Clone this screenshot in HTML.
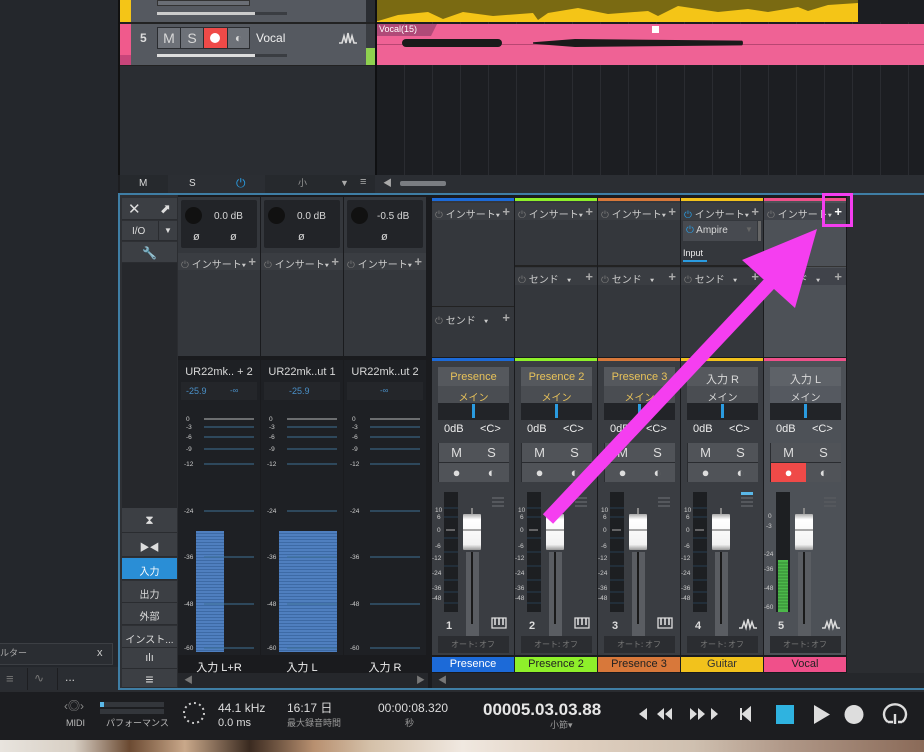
<!DOCTYPE html>
<html><head><meta charset="utf-8"><style>
*{box-sizing:border-box;margin:0;padding:0}
body{width:924px;height:752px;overflow:hidden;background:#1d1e21;font-family:"Liberation Sans","Noto Sans CJK JP",sans-serif;color:#d8d8d8;position:relative}
div,span{position:absolute}
.t{white-space:nowrap;line-height:1}
.ch{top:0;width:82px;height:690px}
.ch>div{left:0;width:82px}
.ins{height:17px;background:#3a3d42;font-size:10px;color:#ccc;padding:3px 0 0 3px;white-space:nowrap}
.ins span{position:static}
.ins b{position:absolute;right:4px;top:1px;font-size:13px;font-weight:bold;color:#aaa}
.pw{color:#777}
.nm{left:6px!important;width:71px!important;height:19px;background:#55585d;font-size:11px;text-align:center;padding-top:4px}
.mn{left:6px!important;width:71px!important;height:17px;background:#4a4d52;font-size:10px;text-align:center;padding-top:3px}
.pan{left:6px!important;width:71px!important;height:17px;background:#222428}
.pan i{position:absolute;left:34px;top:1px;width:3px;height:14px;background:#2a9be0}
.db{height:17px;font-size:11px;color:#eee}
.ms{left:6px!important;width:71px!important;height:39px;background:#2a2c30}
.ms span{width:35px;height:19px;background:#505358;font-size:13px;text-align:center;line-height:19px;color:#ddd}
.lbl{height:15px;font-size:11px;text-align:center;padding-top:2px}
.btn{background:#3c3f44;border-bottom:1px solid #2a2c30;left:122px;width:55px;font-size:10px;text-align:center;color:#ddd}
</style></head><body>

<!-- left dark panel -->
<div style="left:0;top:0;width:118px;height:690px;background:#24272c"></div>
<div style="left:0;top:643px;width:113px;height:22px;background:#2a2d32;border:1px solid #3c3f44;border-left:none"></div>
<div class="t" style="left:0;top:649px;font-size:9px;color:#aaa">ルター</div>
<div class="t" style="left:97px;top:648px;font-size:11px;color:#ccc">x</div>
<div style="left:0;top:667px;width:118px;height:23px;background:#2a2d32"></div>
<div class="t" style="left:6px;top:672px;font-size:13px;color:#777">≡</div>
<div style="left:27px;top:668px;width:1px;height:22px;background:#1d1e21"></div>
<div class="t" style="left:34px;top:672px;font-size:12px;color:#777">∿</div>
<div style="left:57px;top:668px;width:1px;height:22px;background:#1d1e21"></div>
<div class="t" style="left:65px;top:671px;font-size:12px;color:#ccc">...</div>

<!-- track header area -->
<div style="left:118px;top:0;width:257px;height:175px;background:#2a2d32;border-left:2px solid #111"></div>
<div style="left:120px;top:0;width:11px;height:22px;background:#f4c517"></div>
<div style="left:131px;top:0;width:235px;height:22px;background:#555960"></div>
<div style="left:157px;top:0;width:93px;height:6px;background:#6a6e75;border:1px solid #333"></div>
<div style="left:157px;top:12px;width:98px;height:3px;background:#ccc"></div>
<div style="left:255px;top:12px;width:32px;height:3px;background:#3a3d42"></div>
<div style="left:120px;top:22px;width:255px;height:2px;background:#222"></div>
<div style="left:120px;top:24px;width:11px;height:41px;background:#f05a8c"></div>
<div style="left:120px;top:55px;width:11px;height:10px;background:#c8457a"></div>
<div style="left:131px;top:24px;width:235px;height:41px;background:#555960"></div>
<div class="t" style="left:140px;top:32px;font-size:12px;font-weight:bold;color:#ddd">5</div>
<div style="left:157px;top:27px;width:93px;height:22px;background:#2a2c30"></div>
<div class="t" style="left:158px;top:28px;width:22px;height:20px;background:#6d7178;font-size:14px;text-align:center;line-height:20px">M</div>
<div class="t" style="left:181px;top:28px;width:22px;height:20px;background:#6d7178;font-size:14px;text-align:center;line-height:20px">S</div>
<div style="left:204px;top:28px;width:23px;height:20px;background:#ef4a48"></div>
<div style="left:210px;top:33px;width:10px;height:10px;border-radius:50%;background:#fff"></div>
<div class="t" style="left:228px;top:28px;width:21px;height:20px;background:#6d7178;font-size:12px;text-align:center;line-height:20px">◐</div>
<div class="t" style="left:256px;top:32px;font-size:12px;color:#eee">Vocal</div>
<svg style="position:absolute;left:338px;top:30px" width="20" height="16"><path d="M1 13h3l2-7 2 7 2-10 2 10 2-7 2 7h3" stroke="#ddd" stroke-width="1.6" fill="none"/></svg>
<div style="left:157px;top:54px;width:98px;height:3px;background:#ddd"></div>
<div style="left:255px;top:54px;width:32px;height:3px;background:#3a3d42"></div>
<div style="left:366px;top:24px;width:9px;height:24px;background:#3a3d42"></div>
<div style="left:366px;top:48px;width:9px;height:17px;background:#8fd14f"></div>
<div style="left:120px;top:65px;width:255px;height:1px;background:#222"></div>

<!-- arrange area -->
<div style="left:375px;top:0;width:549px;height:175px;background:#1c1e22;border-left:2px solid #0f1012;background-image:repeating-linear-gradient(90deg,transparent 0,transparent 27px,#2a2c31 27px,#2a2c31 28px)"></div>
<div style="left:377px;top:0;width:481px;height:22px;background:#f4c517"></div>
<svg style="position:absolute;left:377px;top:0" width="481" height="22"><path d="M0 0h481v3l-30 2-20 6-10-4-30 5-20-3-30 3-40-6-20 10-10-5-40 3-30-6-30 5-10 7-5-7-40 3-30-4-20 7-15-7-30 3-20 6-25-6-10-4-30 4-10 5-5-5z" fill="#7a6a12"/></svg>
<div style="left:858px;top:0;width:66px;height:22px;background:#1c1e22"></div>
<div style="left:377px;top:24px;width:547px;height:41px;background:#ef6295"></div>
<div style="left:377px;top:24px;width:60px;height:12px;background:#b04a78;clip-path:polygon(0 0,100% 0,90% 100%,0 100%)"></div>
<div class="t" style="left:379px;top:25px;font-size:9px;color:#fff">Vocal(15)</div>
<div style="left:652px;top:26px;width:7px;height:7px;background:#fff"></div>
<div style="left:377px;top:44px;width:547px;height:1px;background:#b84672"></div>
<div style="left:402px;top:39px;width:100px;height:8px;background:#1a1a1a;border-radius:4px"></div>
<div style="left:533px;top:39px;width:210px;height:8px;background:#1a1a1a;border-radius:4px;clip-path:polygon(0 40%,20% 0,100% 20%,100% 80%,20% 100%,0 60%)"></div>

<!-- bottom bar -->
<div style="left:120px;top:175px;width:804px;height:18px;background:#2b2e33"></div>
<div style="left:120px;top:175px;width:48px;height:18px;background:#26292d"></div>
<div class="t" style="left:139px;top:179px;font-size:10px;color:#ddd">M</div>
<div class="t" style="left:189px;top:179px;font-size:10px;color:#ddd">S</div>
<div class="t" style="left:236px;top:177px;font-size:12px;color:#2a9be0">⏻</div>
<div style="left:265px;top:175px;width:110px;height:18px;background:#26292d"></div>
<div class="t" style="left:298px;top:179px;font-size:9px;color:#999">小</div>
<div class="t" style="left:340px;top:179px;font-size:9px;color:#aaa">▼</div>
<div class="t" style="left:360px;top:177px;font-size:11px;color:#aaa">≡</div>
<div class="t" style="left:383px;top:179px;font-size:9px;color:#aaa">◀</div>
<div style="left:400px;top:181px;width:46px;height:5px;background:#7a7d82;border-radius:2px"></div>

<!-- mixer frame -->
<div style="left:118px;top:193px;width:806px;height:497px;background:#2b2d31;border:2px solid #3f7ea5;border-right:none"></div>
<div style="left:120px;top:195px;width:57px;height:493px;background:#2e3034"></div>
<div class="btn" style="top:198px;height:22px;font-size:15px;padding-top:2px;text-align:left;padding-left:6px">✕<span style="left:38px;top:3px;font-size:13px">⬈</span></div>
<div class="btn" style="top:221px;height:20px;padding-top:5px;text-align:left;padding-left:10px">I/O<span style="left:36px;top:0;width:1px;height:20px;background:#2a2c30"></span><span style="left:42px;top:5px;font-size:8px">▼</span></div>
<div class="btn" style="top:242px;height:21px;padding-top:4px;font-size:12px">🔧</div>
<div style="left:122px;top:263px;width:55px;height:245px;background:#26282c"></div>
<div class="btn" style="top:508px;height:25px;padding-top:5px;font-size:12px">⧗</div>
<div class="btn" style="top:533px;height:24px;padding-top:6px;font-size:10px">▶◀</div>
<div class="btn" style="top:558px;height:22px;padding-top:5px;background:#2a8ed6;color:#fff">入力</div>
<div class="btn" style="top:581px;height:22px;padding-top:5px">出力</div>
<div class="btn" style="top:603px;height:22px;padding-top:5px">外部</div>
<div class="btn" style="top:626px;height:22px;padding-top:5px">インスト...</div>
<div class="btn" style="top:648px;height:21px;padding-top:4px;font-size:11px">ılı</div>
<div class="btn" style="top:669px;height:19px;padding-top:2px;font-size:14px">≡</div>

<!-- input channels -->
<div style="left:178px;top:195px;width:250px;height:493px;background:#1a1b1e"></div>
<div class="ch" style="left:178px">
 <div style="top:197px;height:160px;background:#34373c"></div>
 <div style="top:200px;left:3px!important;width:76px;height:48px;background:#222428;border-radius:2px"></div>
 <div style="top:207px;left:7px;width:17px;height:17px;border-radius:50%;background:#111"></div>
 <div class="t" style="top:212px;left:36px;width:auto;font-size:10px">0.0 dB</div>
 <div class="t" style="top:232px;left:15px;width:auto;font-size:11px">ø</div>
 <div class="t" style="top:232px;left:52px;width:auto;font-size:11px">ø</div>
 <div class="ins" style="top:253px"><span class="pw">⏻</span> インサート▾<b>+</b></div>
 <div style="top:356px;height:2px;background:#1a1b1e"></div>
 <div style="top:360px;height:295px;background:#1e2024"></div>
 <div class="t" style="top:367px;font-size:11px;text-align:center">UR22mk.. + 2</div>
 <div style="top:382px;left:3px!important;width:76px;height:18px;background:#24262a"></div>
 <div class="t" style="top:387px;left:8px;width:auto;font-size:9px;color:#4a90c8">-25.9</div>
 <div class="t" style="top:387px;left:52px;width:auto;font-size:8px;color:#4a90c8">-∞</div>
 <div style="top:531px;left:18px;width:28px;height:121px;background:repeating-linear-gradient(#4f7fbf 0,#4f7fbf 2px,#3d6aa5 2px,#3d6aa5 3px)"></div>
 <div class="lbl" style="top:657px;color:#eee">入力 L+R</div>
</div>
<div class="ch" style="left:261px">
 <div style="top:197px;height:160px;background:#34373c"></div>
 <div style="top:200px;left:3px!important;width:76px;height:48px;background:#222428;border-radius:2px"></div>
 <div style="top:207px;left:7px;width:17px;height:17px;border-radius:50%;background:#111"></div>
 <div class="t" style="top:212px;left:36px;width:auto;font-size:10px">0.0 dB</div>
 <div class="t" style="top:232px;left:37px;width:auto;font-size:11px">ø</div>
 <div class="ins" style="top:253px"><span class="pw">⏻</span> インサート▾<b>+</b></div>
 <div style="top:356px;height:2px;background:#1a1b1e"></div>
 <div style="top:360px;height:295px;background:#1e2024"></div>
 <div class="t" style="top:367px;font-size:11px;text-align:center">UR22mk..ut 1</div>
 <div style="top:382px;left:3px!important;width:76px;height:18px;background:#24262a"></div>
 <div class="t" style="top:387px;left:28px;width:auto;font-size:9px;color:#4a90c8">-25.9</div>
 <div style="top:531px;left:18px;width:58px;height:121px;background:repeating-linear-gradient(#4f7fbf 0,#4f7fbf 2px,#3d6aa5 2px,#3d6aa5 3px)"></div>
 <div class="lbl" style="top:657px;color:#eee">入力 L</div>
</div>
<div class="ch" style="left:344px">
 <div style="top:197px;height:160px;background:#34373c"></div>
 <div style="top:200px;left:3px!important;width:76px;height:48px;background:#222428;border-radius:2px"></div>
 <div style="top:207px;left:7px;width:17px;height:17px;border-radius:50%;background:#111"></div>
 <div class="t" style="top:212px;left:33px;width:auto;font-size:10px">-0.5 dB</div>
 <div class="t" style="top:232px;left:37px;width:auto;font-size:11px">ø</div>
 <div class="ins" style="top:253px"><span class="pw">⏻</span> インサート▾<b>+</b></div>
 <div style="top:356px;height:2px;background:#1a1b1e"></div>
 <div style="top:360px;height:295px;background:#1e2024"></div>
 <div class="t" style="top:367px;font-size:11px;text-align:center">UR22mk..ut 2</div>
 <div style="top:382px;left:3px!important;width:76px;height:18px;background:#24262a"></div>
 <div class="t" style="top:387px;left:36px;width:auto;font-size:8px;color:#4a90c8">-∞</div>
 <div class="lbl" style="top:657px;color:#eee">入力 R</div>
</div>
<svg style="position:absolute;left:178px;top:410px" width="250" height="245">
 <g font-size="6.5" fill="#ccc" font-family="Liberation Sans">
 <g id="s">
 <text x="8" y="11">0</text><text x="8" y="19">-3</text><text x="8" y="29">-6</text><text x="8" y="41">-9</text><text x="6" y="56">-12</text><text x="6" y="103">-24</text><text x="6" y="149">-36</text><text x="6" y="196">-48</text><text x="6" y="240">-60</text>
 <path d="M26 9h50M26 17h50M26 27h50M26 39h50M26 54h50M26 101h50M26 147h50M26 194h50M26 238h50" stroke="#3d6f95" stroke-width="1"/>
 <path d="M26 9h50" stroke="#bbb"/>
 </g>
 <use href="#s" x="83"/><use href="#s" x="166"/>
 </g>
</svg>
<div style="left:178px;top:673px;width:250px;height:15px;background:#25272b"></div>
<div class="t" style="left:184px;top:676px;font-size:9px;color:#777">◀</div>
<div class="t" style="left:416px;top:676px;font-size:9px;color:#777">▶</div>
<div style="left:428px;top:195px;width:4px;height:493px;background:#1a1b1e"></div>

<!-- mixer channels -->
<div style="left:432px;top:195px;width:492px;height:493px;background:#1a1b1e"></div>

<div class="ch" style="left:432px">
 <div style="top:198px;height:3px;background:#1c6ad8"></div>
 <div style="top:201px;height:156px;background:#34373c"></div>
 <div class="ins" style="top:203px"><span class="pw">⏻</span> インサート▾<b>+</b></div>
 <div style="top:306px;height:1px;background:#222"></div>
 <div class="ins" style="top:309px;background:#34373c"><span class="pw">⏻</span> センド &nbsp;&nbsp;▾<b>+</b></div>
 <div style="top:358px;height:3px;background:#1c6ad8"></div>
 <div style="top:361px;height:294px;background:#3a3d42"></div>
 <div class="nm" style="top:367px;color:#e8c25a">Presence</div>
 <div class="mn" style="top:386px;color:#e8c25a">メイン</div>
 <div class="pan" style="top:403px"><i></i></div>
 <div class="db t" style="top:424px;left:12px;width:auto">0dB</div><div class="db t" style="top:424px;left:48px;width:auto">&lt;C&gt;</div>
 <div class="ms" style="top:443px"><span style="left:1px;top:0">M</span><span style="left:36px;top:0">S</span><span style="left:1px;top:20px">●</span><span style="left:36px;top:20px">◐</span></div>
</div>
<div class="ch" style="left:515px">
 <div style="top:198px;height:3px;background:#8ef02a"></div>
 <div style="top:201px;height:156px;background:#34373c"></div>
 <div class="ins" style="top:203px"><span class="pw">⏻</span> インサート▾<b>+</b></div>
 <div style="top:265px;height:2px;background:#222"></div>
 <div class="ins" style="top:268px;background:#3a3d42"><span class="pw">⏻</span> センド &nbsp;&nbsp;▾<b>+</b></div>
 <div style="top:358px;height:3px;background:#8ef02a"></div>
 <div style="top:361px;height:294px;background:#3a3d42"></div>
 <div class="nm" style="top:367px;color:#e8c25a">Presence 2</div>
 <div class="mn" style="top:386px;color:#e8c25a">メイン</div>
 <div class="pan" style="top:403px"><i></i></div>
 <div class="db t" style="top:424px;left:12px;width:auto">0dB</div><div class="db t" style="top:424px;left:48px;width:auto">&lt;C&gt;</div>
 <div class="ms" style="top:443px"><span style="left:1px;top:0">M</span><span style="left:36px;top:0">S</span><span style="left:1px;top:20px">●</span><span style="left:36px;top:20px">◐</span></div>
</div>
<div class="ch" style="left:598px">
 <div style="top:198px;height:3px;background:#d8783a"></div>
 <div style="top:201px;height:156px;background:#34373c"></div>
 <div class="ins" style="top:203px"><span class="pw">⏻</span> インサート▾<b>+</b></div>
 <div style="top:265px;height:2px;background:#222"></div>
 <div class="ins" style="top:268px;background:#3a3d42"><span class="pw">⏻</span> センド &nbsp;&nbsp;▾<b>+</b></div>
 <div style="top:358px;height:3px;background:#d8783a"></div>
 <div style="top:361px;height:294px;background:#3a3d42"></div>
 <div class="nm" style="top:367px;color:#e8c25a">Presence 3</div>
 <div class="mn" style="top:386px;color:#e8c25a">メイン</div>
 <div class="pan" style="top:403px"><i></i></div>
 <div class="db t" style="top:424px;left:12px;width:auto">0dB</div><div class="db t" style="top:424px;left:48px;width:auto">&lt;C&gt;</div>
 <div class="ms" style="top:443px"><span style="left:1px;top:0">M</span><span style="left:36px;top:0">S</span><span style="left:1px;top:20px">●</span><span style="left:36px;top:20px">◐</span></div>
</div>
<div class="ch" style="left:681px">
 <div style="top:198px;height:3px;background:#f2c21c"></div>
 <div style="top:201px;height:156px;background:#34373c"></div>
 <div class="ins" style="top:203px"><span style="color:#2a9be0">⏻</span> インサート▾<b>+</b></div>
 <div style="top:221px;left:2px!important;width:74px;height:20px;background:#474a50;font-size:10px;padding:4px 0 0 3px;white-space:nowrap"><span style="position:static;color:#2a9be0">⏻</span> Ampire<span style="left:62px;top:4px;font-size:8px;color:#666">▼</span></div>
 <div style="top:221px;left:77px!important;width:3px;height:20px;background:#666"></div>
 <div class="t" style="top:249px;left:2px;width:auto;font-size:9px;color:#eee">Input</div>
 <div style="top:260px;left:2px;width:24px;height:2px;background:#2a9be0"></div>
 <div style="top:265px;height:2px;background:#222"></div>
 <div class="ins" style="top:268px;background:#3a3d42"><span class="pw">⏻</span> センド &nbsp;&nbsp;▾<b>+</b></div>
 <div style="top:358px;height:3px;background:#f2c21c"></div>
 <div style="top:361px;height:294px;background:#3a3d42"></div>
 <div class="nm" style="top:367px">入力 R</div>
 <div class="mn" style="top:386px">メイン</div>
 <div class="pan" style="top:403px"><i></i></div>
 <div class="db t" style="top:424px;left:12px;width:auto">0dB</div><div class="db t" style="top:424px;left:48px;width:auto">&lt;C&gt;</div>
 <div class="ms" style="top:443px"><span style="left:1px;top:0">M</span><span style="left:36px;top:0">S</span><span style="left:1px;top:20px">●</span><span style="left:36px;top:20px">◐</span></div>
 <div style="top:492px;left:60px;width:12px;height:3px;background:#5ab8e8"></div>
</div>
<div class="ch" style="left:764px">
 <div style="top:198px;height:3px;background:#f0508a"></div>
 <div style="top:201px;height:156px;background:#4d5157"></div>
 <div class="ins" style="top:203px;background:#40434a"><span class="pw">⏻</span> インサート▾<b style="color:#fff">+</b></div>
 <div style="top:266px;height:1px;background:#333"></div>
 <div class="ins" style="top:268px;background:#40434a"><span class="pw">⏻</span> センド &nbsp;&nbsp;▾<b>+</b></div>
 <div style="top:358px;height:3px;background:#f0508a"></div>
 <div style="top:361px;height:294px;background:#4d5157"></div>
 <div class="nm" style="top:367px;background:#5e6268">入力 L</div>
 <div class="mn" style="top:386px;background:#555960">メイン</div>
 <div class="pan" style="top:403px"><i></i></div>
 <div class="db t" style="top:424px;left:12px;width:auto">0dB</div><div class="db t" style="top:424px;left:48px;width:auto">&lt;C&gt;</div>
 <div class="ms" style="top:443px"><span style="left:1px;top:0">M</span><span style="left:36px;top:0">S</span><span style="left:1px;top:20px;background:#ef4a48;color:#fff">●</span><span style="left:36px;top:20px">◐</span></div>
</div>

<svg style="position:absolute;left:432px;top:488px" width="415" height="170" font-family="Liberation Sans">
 <defs>
 <linearGradient id="cap" x1="0" x2="0" y1="0" y2="1"><stop offset="0" stop-color="#aaa"/><stop offset=".15" stop-color="#fff"/><stop offset=".85" stop-color="#f2f2f2"/><stop offset="1" stop-color="#999"/></linearGradient>
 <g id="f">
  <rect x="12" y="4" width="14" height="120" fill="#1d1f22"/>
  <path d="M12 20h14M12 29h14M12 50h14M12 64h14M12 78h14M12 92h14M12 104h14M12 115h14" stroke="#2d4a60" stroke-width=".8"/>
  <path d="M14 42h9" stroke="#aaa"/>
  <g font-size="6.5" fill="#ccc"><text x="3" y="24">10</text><text x="5" y="31">6</text><text x="5" y="44">0</text><text x="3" y="60">-6</text><text x="0" y="72">-12</text><text x="0" y="87">-24</text><text x="0" y="102">-36</text><text x="0" y="112">-48</text></g>
  <rect x="34" y="64" width="13" height="88" fill="#5a5d62"/>
  <rect x="39" y="64" width="2" height="72" fill="#1a1a1a"/>
  <rect x="39" y="20" width="2" height="8" fill="#888"/>
  <rect x="31" y="26" width="18" height="36" rx="1" fill="url(#cap)"/>
  <path d="M31 42h18" stroke="#555"/>
  <path d="M60 10h12M60 14h12M60 18h12" stroke="#55585d" stroke-width="2"/>
  <rect x="6" y="148" width="71" height="17" fill="#2b2d31"/>
  <text x="41" y="159" font-size="8" fill="#777" text-anchor="middle" font-family="Noto Sans CJK JP">オート: オフ</text>
 </g>
 <g id="pi"><path d="M60 130h14v10h-14z" fill="none" stroke="#ddd" stroke-width="1.3"/><path d="M63 130v7M67 130v7M71 130v7" stroke="#ddd" stroke-width="1.6"/></g>
 <g id="wi"><path d="M58 140h3l2-6 2 6 2-9 2 9 2-6 2 6h3" stroke="#ddd" stroke-width="1.5" fill="none"/></g>
 </defs>
 <use href="#f"/><use href="#f" x="83"/><use href="#f" x="166"/><use href="#f" x="249"/><use href="#f" x="332"/>
 <use href="#pi"/><use href="#pi" x="83"/><use href="#pi" x="166"/><use href="#wi" x="249"/><use href="#wi" x="332"/>
 <rect x="332" y="4" width="12" height="120" fill="#4d5157"/>
 <rect x="344" y="4" width="14" height="120" fill="#1d1f22"/>
 <rect x="346" y="72" width="10" height="52" fill="#4cb84a"/>
 <path d="M346 75h10M346 78h10M346 81h10M346 84h10M346 87h10M346 90h10M346 93h10M346 96h10M346 99h10M346 102h10M346 105h10M346 108h10M346 111h10M346 114h10M346 117h10M346 120h10" stroke="#2e7a2e" stroke-width=".8"/>
 <g font-size="6.5" fill="#ccc"><text x="336" y="30">0</text><text x="334" y="40">-3</text><text x="332" y="68">-24</text><text x="332" y="83">-36</text><text x="332" y="102">-48</text><text x="332" y="121">-60</text></g>
 <g font-size="11" font-weight="bold" fill="#ddd"><text x="14" y="141">1</text><text x="97" y="141">2</text><text x="180" y="141">3</text><text x="263" y="141">4</text><text x="346" y="141">5</text></g>
</svg>
<div class="t" style="left:432px;top:657px;width:82px;height:15px;background:#1c6ad8;font-size:11px;text-align:center;padding-top:2px;color:#fff">Presence</div>
<div class="t" style="left:515px;top:657px;width:82px;height:15px;background:#8ef02a;font-size:11px;text-align:center;padding-top:2px;color:#222">Presence 2</div>
<div class="t" style="left:598px;top:657px;width:82px;height:15px;background:#d8783a;font-size:11px;text-align:center;padding-top:2px;color:#222">Presence 3</div>
<div class="t" style="left:681px;top:657px;width:82px;height:15px;background:#f2c21c;font-size:11px;text-align:center;padding-top:2px;color:#333">Guitar</div>
<div class="t" style="left:764px;top:657px;width:82px;height:15px;background:#f0508a;font-size:11px;text-align:center;padding-top:2px;color:#222">Vocal</div>
<div style="left:432px;top:673px;width:492px;height:15px;background:#25272b"></div>
<div class="t" style="left:438px;top:676px;font-size:9px;color:#777">◀</div>
<div style="left:847px;top:195px;width:77px;height:478px;background:#2b2d31"></div>

<!-- transport -->
<div style="left:0;top:690px;width:924px;height:50px;background:#1c1d20;border-top:2px solid #2a2c30"></div>
<div class="t" style="left:64px;top:700px;font-size:12px;color:#888">‹◎›</div>
<div class="t" style="left:66px;top:719px;font-size:9px;color:#bbb">MIDI</div>
<div style="left:100px;top:702px;width:64px;height:5px;background:#33363b"></div>
<div style="left:100px;top:702px;width:4px;height:5px;background:#5ab8e8"></div>
<div style="left:100px;top:709px;width:64px;height:5px;background:#33363b"></div>
<div class="t" style="left:106px;top:719px;font-size:9px;color:#bbb">パフォーマンス</div>
<svg style="position:absolute;left:181px;top:700px" width="26" height="26"><circle cx="13" cy="13" r="10" fill="none" stroke="#ccc" stroke-width="2" stroke-dasharray="2 3.2"/></svg>
<div class="t" style="left:218px;top:702px;font-size:12px;color:#ddd">44.1 kHz</div>
<div class="t" style="left:218px;top:718px;font-size:11px;color:#ddd">0.0 ms</div>
<div class="t" style="left:287px;top:702px;font-size:12px;color:#ddd">16:17 日</div>
<div class="t" style="left:287px;top:719px;font-size:9px;color:#999">最大録音時間</div>
<div class="t" style="left:378px;top:702px;font-size:12px;color:#ddd">00:00:08.320</div>
<div class="t" style="left:405px;top:719px;font-size:9px;color:#999">秒</div>
<div class="t" style="left:483px;top:701px;font-size:17px;font-weight:bold;color:#e6e6e6">00005.03.03.88</div>
<div class="t" style="left:550px;top:721px;font-size:9px;color:#999">小節▾</div>
<svg style="position:absolute;left:636px;top:702px" width="290" height="26">
 <path d="M3 12l8-6v12z" fill="#ddd"/>
 <path d="M21 12l7-6v12zM29 12l7-6v12z" fill="#ddd"/>
 <path d="M54 6l7 6-7 6zM62 6l7 6-7 6z" fill="#ddd"/>
 <path d="M75 6l7 6-7 6z" fill="#ddd"/>
 <path d="M105 6v12M107 12l7-6v12z" stroke="#ddd" stroke-width="2" fill="#ddd"/>
 <rect x="140" y="3" width="18" height="19" fill="#2fb3e0"/>
 <path d="M178 3l16 9.5-16 9.5z" fill="#ddd"/>
 <circle cx="218" cy="12.5" r="9.5" fill="#ddd"/>
 <path d="M252 20a11 10 0 1 1 14 0M259 12v10M252 20h5M266 20h-4" stroke="#ddd" stroke-width="2.4" fill="none"/>
</svg>
<div style="left:0;top:740px;width:924px;height:12px;background:linear-gradient(90deg,#e8e4de 0,#d8cfc4 8%,#6b4a32 14%,#c9a88a 20%,#3a2a20 27%,#b89070 34%,#d4c0a8 40%,#f0e8e0 50%,#e0d0c0 62%,#cfc0b0 75%,#b09888 85%,#8a6a58 100%)"></div>

<!-- magenta annotation -->
<svg style="position:absolute;left:0;top:0" width="924" height="752">
 <rect x="823.5" y="194.5" width="28" height="31" fill="none" stroke="#f53ef0" stroke-width="3"/>
 <path d="M548 519L770 283" stroke="#f53ef0" stroke-width="14"/>
 <path d="M817 229L742 260L795 308z" fill="#f53ef0"/>
</svg>
</body></html>
